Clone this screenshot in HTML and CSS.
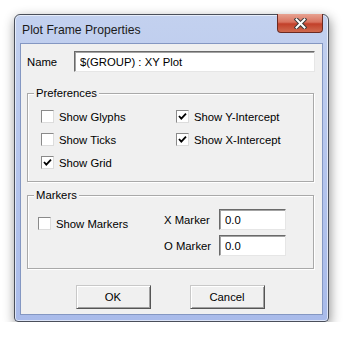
FILE: index.html
```html
<!DOCTYPE html>
<html lang="en">
<head>
  <meta charset="UTF-8" />
  <title>Plot Frame Properties</title>
  <link rel="stylesheet" href="styles.css">
</head>
<body>
  <div class="window">
    <div class="titlebar">
      <span class="title">Plot Frame Properties</span>
      <div class="close">
        <svg width="13" height="11" viewBox="0 0 13 11">
          <path d="M2.5 1.5 L10.5 9.5 M10.5 1.5 L2.5 9.5" stroke="#3a3a3a" stroke-width="4" stroke-linecap="square"/>
          <path d="M2.5 1.5 L10.5 9.5 M10.5 1.5 L2.5 9.5" stroke="#ffffff" stroke-width="2" stroke-linecap="square"/>
        </svg>
      </div>
    </div>

    <div class="client">
      <div class="name-row">
        <label class="name-label">Name</label>
        <input class="field name-field" type="text" value="$(GROUP) : XY Plot">
      </div>

      <div class="group prefs">
        <div class="group-title">Preferences</div>
        <div class="pref-grid">
          <div class="check"><span class="box"></span>Show Glyphs</div>
          <div class="check"><span class="box checked"><svg width="11" height="11" viewBox="0 0 11 11"><path d="M2 5 L4.3 7.6 L9 2.6" fill="none" stroke="#000" stroke-width="1.8"/></svg></span>Show Y-Intercept</div>
          <div class="check"><span class="box"></span>Show Ticks</div>
          <div class="check"><span class="box checked"><svg width="11" height="11" viewBox="0 0 11 11"><path d="M2 5 L4.3 7.6 L9 2.6" fill="none" stroke="#000" stroke-width="1.8"/></svg></span>Show X-Intercept</div>
          <div class="check"><span class="box checked"><svg width="11" height="11" viewBox="0 0 11 11"><path d="M2 5 L4.3 7.6 L9 2.6" fill="none" stroke="#000" stroke-width="1.8"/></svg></span>Show Grid</div>
        </div>
      </div>

      <div class="group markers">
        <div class="group-title">Markers</div>
        <div class="marker-body">
          <div class="check show-markers"><span class="box"></span>Show Markers</div>
          <div class="marker-fields">
            <label>X Marker</label>
            <input class="field marker-field" type="text" value="0.0">
            <label>O Marker</label>
            <input class="field marker-field" type="text" value="0.0">
          </div>
        </div>
      </div>

      <div class="buttons">
        <button class="btn">OK</button>
        <button class="btn">Cancel</button>
      </div>
    </div>
  </div>
</body>
</html>
```

FILE: styles.css
```css
body {
  margin: 0;
  background: #ffffff;
  font-family: "Liberation Sans", Arial, sans-serif;
  font-size: 11.3px;
  color: #000;
}
.window {
  box-sizing: border-box;
  width: 315px;
  height: 308px;
  margin: 14px 0 0 14px;
  padding: 0 5px 5px 5px;
  border: 1px solid #4a4f5a;
  border-radius: 6px 6px 4px 4px;
  background: linear-gradient(to bottom, #c3d1ef 0%, #b7c7ee 40%, #a9bbea 100%);
  box-shadow: 1px 4px 12px rgba(0, 0, 0, 0.45), inset 0 0 0 1px rgba(255, 255, 255, 0.6);
}
.titlebar {
  display: flex;
  height: 28px;
  align-items: center;
}
.title {
  padding-left: 2px;
  padding-top: 1px;
  font-size: 12.2px;
  color: #1b1b1b;
}
.close {
  box-sizing: border-box;
  align-self: flex-start;
  margin-left: auto;
  width: 46px;
  height: 19px;
  margin-top: -1px;
  display: flex;
  align-items: center;
  justify-content: center;
  border: 1px solid #6b2a22;
  border-top: none;
  border-radius: 0 0 4px 4px;
  background: linear-gradient(to bottom, #e7a291 0%, #d9735f 45%, #c2402a 55%, #d06a4f 100%);
}
.client {
  box-sizing: border-box;
  height: 272px;
  border: 1px solid #8497c2;
  background: #f0f0f0;
  padding: 7px 6px 0 6px;
}
.name-row {
  display: flex;
  align-items: center;
}
.name-label {
  width: 47px;
}
.field {
  box-sizing: border-box;
  height: 21px;
  margin: 0;
  padding: 1px 0 0 5px;
  font-family: inherit;
  font-size: 11.3px;
  background: #fff;
  border: 1px solid;
  border-color: #6a6a6a #e6e6e6 #e6e6e6 #6a6a6a;
  box-shadow: inset 1px 1px 0 #a3a3a3;
  outline: none;
}
.name-field {
  width: 241px;
}
.group {
  width: 287px;
  box-sizing: border-box;
  border: 1px solid #a9a9a9;
  box-shadow: 1px 1px 0 #ffffff, inset 1px 1px 0 #ffffff;
}
.group-title {
  width: fit-content;
  margin: -7px 0 0 6px;
  padding: 0 2px;
  line-height: 13px;
  background: #f0f0f0;
}
.prefs {
  margin-top: 21px;
  padding-bottom: 7px;
}
.pref-grid {
  display: grid;
  grid-template-columns: 135px 1fr;
  grid-auto-rows: 23px;
  margin: 5px 0 0 13px;
}
.check {
  display: flex;
  align-items: center;
}
.box {
  box-sizing: border-box;
  width: 13px;
  height: 13px;
  margin-right: 5px;
  background: #fff;
  border: 1px solid;
  border-color: #8a8a8a #dcdcdc #dcdcdc #8a8a8a;
  display: flex;
  align-items: center;
  justify-content: center;
}
.markers {
  margin-top: 13px;
  padding-bottom: 12px;
}
.marker-body {
  display: flex;
  margin: 7px 0 0 10px;
}
.show-markers {
  width: 126px;
  height: 13px;
  margin-top: 8px;
}
.marker-fields {
  display: grid;
  grid-template-columns: 55px 67px;
  row-gap: 5px;
  align-items: center;
}
.marker-field {
  width: 67px;
}
.buttons {
  display: flex;
  justify-content: center;
  gap: 39px;
  margin-top: 16px;
  padding-right: 3px;
}
.btn {
  box-sizing: border-box;
  width: 75px;
  height: 24px;
  font-family: inherit;
  font-size: 11.3px;
  color: #000;
  background: #f0f0f0;
  border: 1px solid;
  border-color: #c8c8c8 #555555 #555555 #c8c8c8;
  box-shadow: inset 1px 1px 0 #ffffff, inset -1px -1px 0 #a0a0a0;
}
```
